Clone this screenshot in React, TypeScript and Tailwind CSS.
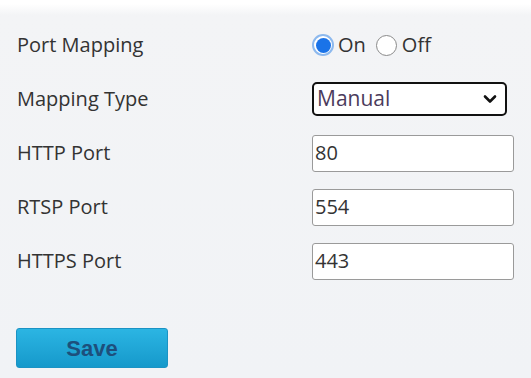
import React from "react";

const font = { fontFamily: '"Open Sans", "Noto Sans", sans-serif' };

function Row({ label, children }: { label: string; children: React.ReactNode }) {
  return (
    <div className="flex h-[54px] items-center">
      <div className="w-[312px] pl-[17px] text-[20px] text-[#333]">{label}</div>
      <div className="flex items-center">{children}</div>
    </div>
  );
}

function TextInput({ value }: { value: string }) {
  return (
    <div className="flex h-[37px] w-[202px] items-center rounded-[3px] border-[1.5px] border-[#9a9a9a] bg-white pl-[2px] text-[20px] text-[#333]">
      {value}
    </div>
  );
}

export default function App() {
  return (
    <div
      className="h-[378px] w-[531px] bg-gradient-to-b from-white from-[1%] via-[#f3f4f6] via-[4%] to-[#f1f3f6]"
      style={font}
    >
      <div className="pt-[18px]">
        <Row label="Port Mapping">
          <div className="flex items-center text-[20px] text-[#333]">
            <div className="flex h-[22px] w-[22px] items-center justify-center rounded-full border-[2px] border-[#8db9ee] bg-white">
              <div className="h-[15px] w-[15px] rounded-full bg-[#1a73e8]" />
            </div>
            <span className="ml-[4px]">On</span>
            <div className="ml-[10px] h-[21px] w-[21px] rounded-full border-[1.5px] border-[#8a8a8a] bg-white" />
            <span className="ml-[5px]">Off</span>
          </div>
        </Row>
        <Row label="Mapping Type">
          <div className="flex h-[34px] w-[195px] items-center justify-between rounded-[5px] border-[2px] border-[#111] bg-white pl-[3px] pr-[8px] text-[21px] text-[#4b3b5c]">
            <span>Manual</span>
            <svg width="14" height="10" viewBox="0 0 14 10">
              <path d="M2 2.5 L7 7.5 L12 2.5" fill="none" stroke="#111" strokeWidth="2.6" strokeLinecap="round" strokeLinejoin="round" />
            </svg>
          </div>
        </Row>
        <Row label="HTTP Port">
          <TextInput value="80" />
        </Row>
        <Row label="RTSP Port">
          <TextInput value="554" />
        </Row>
        <Row label="HTTPS Port">
          <TextInput value="443" />
        </Row>
      </div>
      <div className="mt-[40px] pl-[16px]">
        <div
          className="flex h-[40px] w-[152px] items-center justify-center rounded-[3px] border border-[#1b93c4] bg-gradient-to-b from-[#2bb5e3] to-[#1599cb] text-[22px] font-bold text-[#1d4f7c]"
          style={{ fontFamily: '"Liberation Sans", Arial, sans-serif' }}
        >
          Save
        </div>
      </div>
    </div>
  );
}
